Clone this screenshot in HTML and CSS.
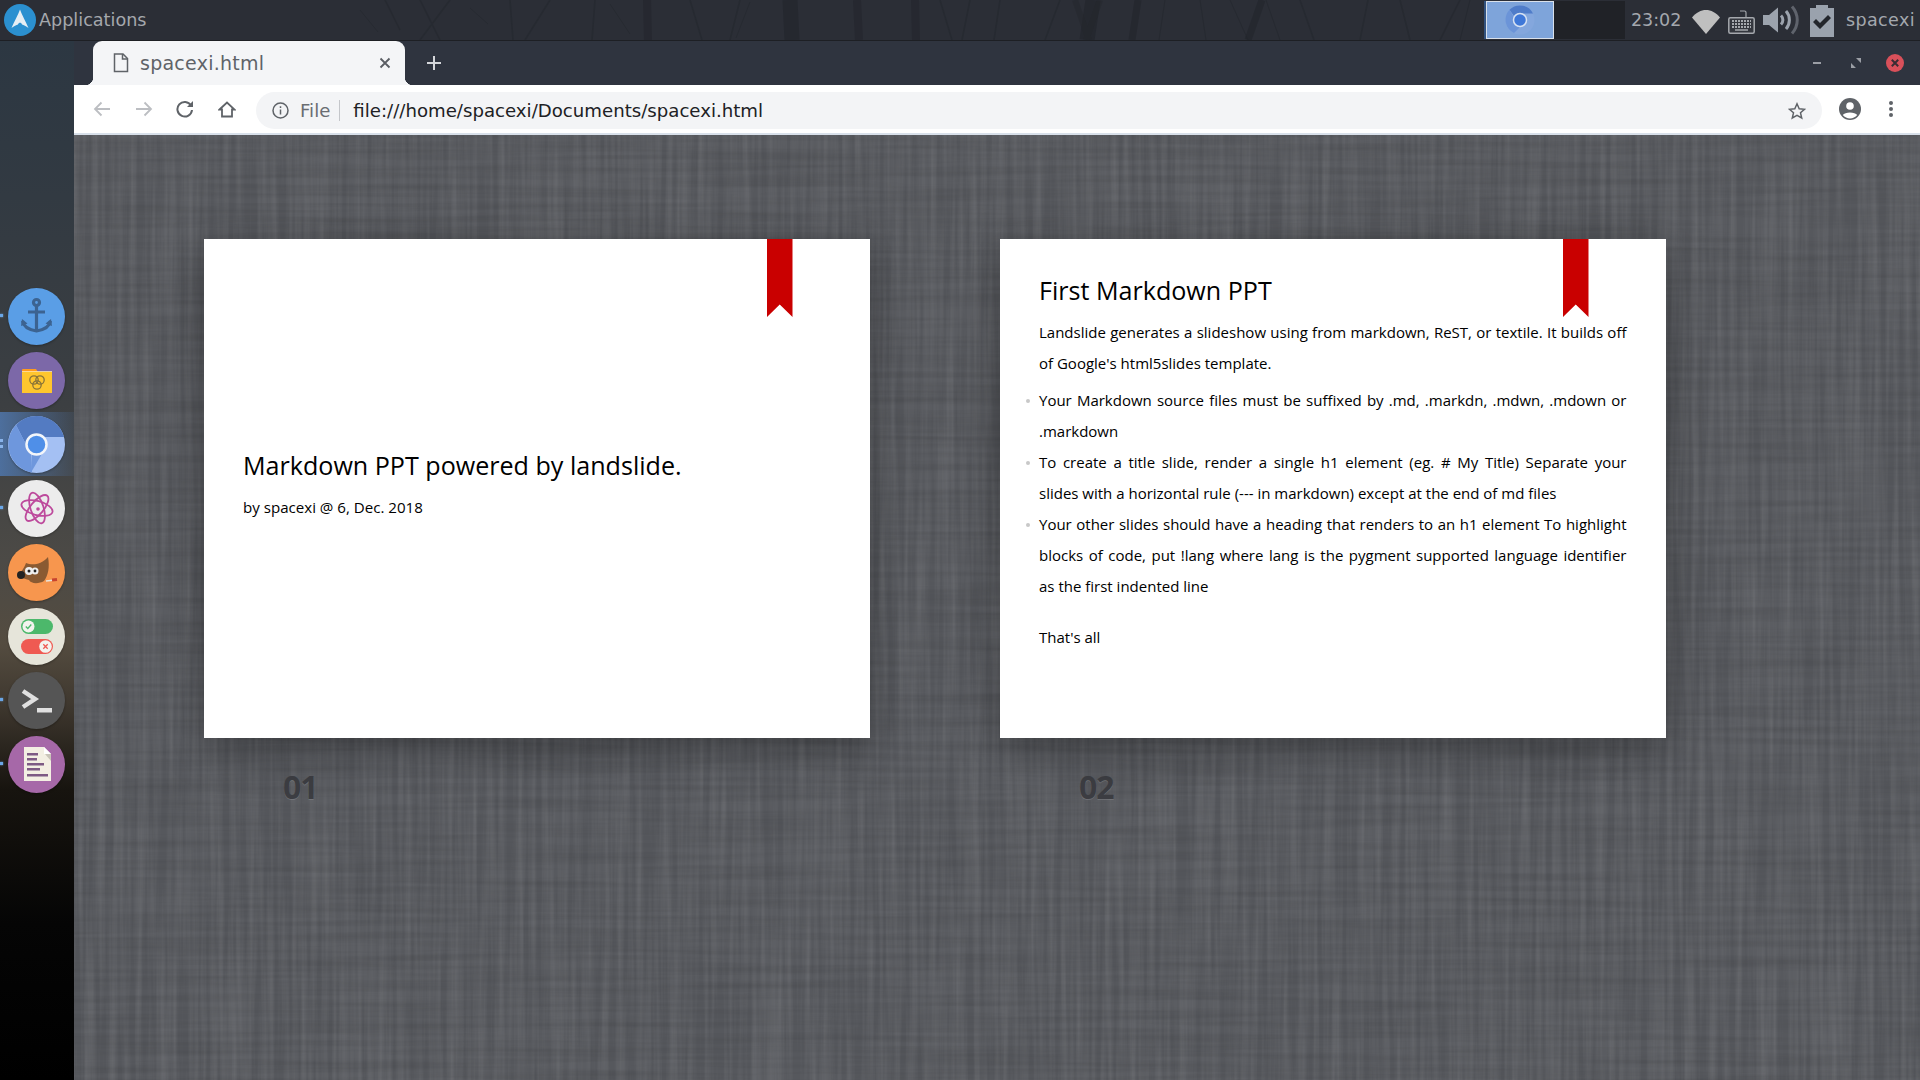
FILE: index.html
```html
<!DOCTYPE html>
<html lang="en">
<head>
<meta charset="utf-8">
<title>spacexi.html</title>
<link rel="stylesheet" href="styles.css">
</head>
<body>
<header class="panel">
  <svg class="panel-trees" width="1920" height="40" viewBox="0 0 1920 40" fill="none" stroke="#22252b">
    <path d="M647 0l1 40M857 0l2 40M915 0l1 40" stroke-width="8" opacity=".55"/>
    <path d="M790 0l2 40M1087 40l6-40" stroke-width="15" opacity=".6"/>
    <path d="M1138 0l-6 40M1262 0l-14 40" stroke-width="7" opacity=".6"/>
    <path d="M1100 0l-14 40M1075 0l14 40" stroke-width="6" opacity=".4"/>
    <path d="M595 0l-3 40M510 0l3 40M525 40l25-40M420 0l20 40M385 0l15 30M450 0l-30 40M1060 0l-15 40M940 0l12 40M970 0l-8 40M1400 0l10 40M1440 40l20-40M1300 0l14 40M1360 40l8-40M1000 0l-6 40M740 0l-10 40M690 0l12 40" stroke-width="1.500" opacity=".5"/>
    <path d="M470 8l18 16M360 10l18 22M610 4l20 30M750 2l-14 36M1230 0l18 40M1280 40l-14-40M1165 0l-6 40M1200 0l6 40M1470 0l-10 40" stroke-width="1" opacity=".5"/>
  </svg>
  <div class="apps">
    <svg class="arch" width="34" height="34" viewBox="0 0 34 34"><circle cx="17" cy="17" r="16" fill="#2b90d0"/><path d="M17 6.500C15.500 11 11 19 8.500 25 11 23.300 13.300 22 15 21.600 15.500 19 18.500 19 19 21.600 20.700 22 23 23.300 25.500 25 23 19 18.500 11 17 6.500Z" fill="#e6eef4"/></svg>
    <span class="apps-label">Applications</span>
  </div>
  <div class="taskbar">
    <div class="task-active">
      <svg width="30" height="30" viewBox="0 0 30 30"><circle cx="15" cy="15" r="14.500" fill="#84a7dd"/><path d="M15 .5A14.500 14.500 0 0 1 28 8.500L15 8.500A6.500 6.500 0 0 0 9 11L4.500 4.800A14.500 14.500 0 0 1 15 .5Z" fill="#4f7cc9"/><path d="M4.500 4.800L11 16 15 22 9 28A14.500 14.500 0 0 1 4.500 4.800Z" fill="#6b94d8"/><circle cx="15" cy="15" r="6.500" fill="#3f78d8" stroke="#d7e2f2" stroke-width="1.500"/></svg>
    </div>
    <div class="task-idle"></div>
  </div>
  <span class="clock">23:02</span>
  <div class="tray">
    <svg class="tray-wifi" width="28" height="24" viewBox="0 0 28 24"><path d="M0 7.500C8-2.500 20-2.500 28 7.500L14 24Z" fill="#bfbfbf"/></svg>
    <svg class="tray-kbd" width="27" height="26" viewBox="0 0 27 26"><path d="M18 9V4.500a1.500 1.500 0 0 0-1.500-1.500H12" fill="none" stroke="#a5a8ad" stroke-width="1.200"/><rect x=".8" y="9.800" width="25.400" height="15.400" rx="1.500" fill="#34373e" stroke="#a5a8ad" stroke-width="1.500"/><path d="M4 13h19M4 16h19M4 19h19" stroke="#a5a8ad" stroke-width="2" stroke-dasharray="2 1"/><path d="M7 22h13" stroke="#a5a8ad" stroke-width="1.500"/></svg>
    <svg class="tray-vol" width="37" height="30" viewBox="0 0 37 30"><path d="M0 10h6l9-7.500v25L6 20H0Z" fill="#9ca3ad"/><path d="M18 10.500c2.500 2.500 2.500 6.500 0 9" fill="none" stroke="#9ca3ad" stroke-width="3"/><path d="M23 6c4.500 5 4.500 13 0 18" fill="none" stroke="#9ca3ad" stroke-width="3"/><path d="M29 1.500c7 8 7 19 0 27" fill="none" stroke="#5f636c" stroke-width="3"/></svg>
    <svg class="tray-task" width="24" height="32" viewBox="0 0 24 32"><path d="M0 3h6V0h12v3h6v32H0Z" fill="#9aa2ad"/><path d="M3 17l3-3 4 4 8-8 3 3-11 11Z" fill="#23262c"/></svg>
  </div>
  <span class="user">spacexi</span>
</header>

<main class="desk">
  <aside class="dock">
    <div class="dock-item mark">
      <svg class="dock-icon" viewBox="0 0 57 57"><circle cx="28.500" cy="28.500" r="28.500" fill="#5a9ee6"/><g fill="none" stroke="#3c6391" stroke-width="3.200"><circle cx="28.500" cy="14.500" r="3"/><path d="M28.500 18V43M20 24h17"/><path d="M14.500 33c1 6 8 9 14 10 6-1 13-4 14-10"/></g><path d="M13 38l1-7 5.500 4.500ZM44 38l-1-7-5.500 4.500Z" fill="#3c6391"/></svg>
    </div>
    <div class="dock-item">
      <svg class="dock-icon" viewBox="0 0 57 57"><circle cx="28.500" cy="28.500" r="28.500" fill="#7c68a8"/><path d="M14 18a1 1 0 0 1 1-1h13l2 3H14Z" fill="#ff9b1e"/><rect x="14" y="20" width="30" height="21" fill="#ffc62e"/><rect x="14" y="19" width="30" height=".8" fill="#ffe9b0"/><g fill="none" stroke="#8a7438" stroke-width="1.300"><circle cx="26" cy="28" r="4.200"/><circle cx="32" cy="28" r="4.200"/><circle cx="29" cy="33" r="4.200"/></g></svg>
    </div>
    <div class="dock-item active mark-double">
      <svg class="dock-icon" viewBox="0 0 57 57"><circle cx="28.500" cy="28.500" r="28.500" fill="#a4c0f3"/><path d="M28.500 0A28.500 28.500 0 0 1 56 21H28.500A9 9 0 0 0 19 30.500L8 9A28.500 28.500 0 0 1 28.500 0Z" fill="#537bc2"/><path d="M8 9L19 30.500 23 37 24 56.500A28.500 28.500 0 0 1 8 9Z" fill="#6e97dd"/><path d="M35 36L23 56.500 24 36Z" fill="#6e97dd"/><circle cx="28.500" cy="28.500" r="10" fill="#4f8fe8" stroke="#f2f5fa" stroke-width="2.500"/></svg>
    </div>
    <div class="dock-item mark">
      <svg class="dock-icon" viewBox="0 0 57 57"><circle cx="28.500" cy="28.500" r="28.500" fill="#ececec"/><g fill="none" stroke="#bd4a9c" stroke-width="1.800"><ellipse cx="29" cy="28" rx="16" ry="7" transform="rotate(15 29 28)"/><ellipse cx="29" cy="28" rx="16" ry="6.500" transform="rotate(72 29 28)"/><ellipse cx="29" cy="28" rx="16" ry="6.500" transform="rotate(-50 29 28)"/></g><circle cx="30" cy="29" r="1.800" fill="#bd4a9c"/></svg>
    </div>
    <div class="dock-item">
      <svg class="dock-icon" viewBox="0 0 57 57"><circle cx="28.500" cy="28.500" r="28.500" fill="#f7964e"/><path d="M18 19c5 2 14 3 22-6 2 10 0 19-4 24-5 3-13 3-15-1-5-1-9-3-9-6 1-3 4-5 6-11Z" fill="#8a5a32"/><path d="M38 37l9-1" stroke="#e8e4dc" stroke-width="1.500"/><path d="M44 36l5-.5" stroke="#c7432f" stroke-width="3"/><circle cx="13" cy="31" r="4" fill="#222"/><circle cx="21" cy="27" r="4" fill="#eee"/><circle cx="27" cy="27" r="3.500" fill="#eee"/><circle cx="21" cy="27" r="1.500" fill="#222"/><circle cx="27" cy="27" r="1.400" fill="#222"/></svg>
    </div>
    <div class="dock-item">
      <svg class="dock-icon" viewBox="0 0 57 57"><circle cx="28.500" cy="28.500" r="28.500" fill="#e6e5da"/><rect x="13" y="11" width="32" height="15" rx="7.500" fill="#4cb86b"/><circle cx="20.500" cy="18.500" r="6" fill="#f3f3ee"/><path d="M17.800 18.500l2 2 3.500-4" fill="none" stroke="#4cb86b" stroke-width="1.300"/><rect x="13" y="31" width="32" height="15" rx="7.500" fill="#ef5a52"/><circle cx="37.500" cy="38.500" r="6.300" fill="#f3f3ee"/><path d="M35.300 36.300l4.400 4.400m0-4.400l-4.400 4.400" stroke="#ef5a52" stroke-width="1.300"/></svg>
    </div>
    <div class="dock-item mark">
      <svg class="dock-icon" viewBox="0 0 57 57"><circle cx="28.500" cy="28.500" r="28.500" fill="#555"/><path d="M15 19l12 8-12 8" fill="none" stroke="#e0e0e0" stroke-width="4.500"/><rect x="29" y="36" width="15" height="4.500" fill="#e0e0e0"/></svg>
    </div>
    <div class="dock-item mark">
      <svg class="dock-icon" viewBox="0 0 57 57"><circle cx="28.500" cy="28.500" r="28.500" fill="#a668a8"/><path d="M16 11h20l7 7v27H16Z" fill="#f3efe3"/><path d="M36 11l7 7h-7Z" fill="#fff"/><path d="M37 18h6v7Z" fill="#c9c4b8"/><g fill="#7d5a84"><rect x="19" y="17" width="11" height="2.500"/><rect x="19" y="22" width="10" height="2.500"/><rect x="19" y="27" width="17" height="2.500"/><rect x="19" y="32" width="13" height="2.500"/><rect x="19" y="38" width="21" height="2.500"/></g></svg>
    </div>
  </aside>

  <section class="window">
    <div class="tabstrip">
      <div class="tab">
        <svg class="tab-file" width="16" height="20" viewBox="0 0 16 20" fill="none" stroke="#5f6368" stroke-width="1.500"><path d="M1.500 1h8.500l4.500 4.500V18.500H1.500Z"/><path d="M9.500 1v5h5"/></svg>
        <span class="tab-title">spacexi.html</span>
        <svg class="tab-close" width="12" height="12" viewBox="0 0 12 12" stroke="#5a5d63" stroke-width="1.800"><path d="M1.500 1.500l9 9m0-9l-9 9"/></svg>
      </div>
      <svg class="newtab" width="16" height="16" viewBox="0 0 16 16" stroke="#d4d6da" stroke-width="2"><path d="M8 1v14M1 8h14"/></svg>
      <div class="winctl">
        <span class="win-min"></span>
        <svg class="win-max" width="10" height="10" viewBox="0 0 10 10" fill="#9b9ea5"><path d="M5 0h5v5ZM0 5l5 5H0Z"/></svg>
        <svg class="win-close" width="18" height="18" viewBox="0 0 18 18"><circle cx="9" cy="9" r="9" fill="#d9505a"/><path d="M5.800 5.800l6.400 6.400m0-6.400l-6.400 6.400" stroke="#3a2c33" stroke-width="2"/></svg>
      </div>
    </div>
    <nav class="toolbar">
      <svg class="tb-icon tb-back" width="18" height="16" viewBox="0 0 18 16" fill="none" stroke="#bcbec2" stroke-width="1.800"><path d="M17 8H2M8.500 1.500L2 8l6.500 6.500"/></svg>
      <svg class="tb-icon tb-fwd" width="18" height="16" viewBox="0 0 18 16" fill="none" stroke="#bcbec2" stroke-width="1.800"><path d="M1 8h15M9.500 1.500L16 8l-6.500 6.500"/></svg>
      <svg class="tb-icon tb-reload" width="18" height="18" viewBox="0 0 18 18" fill="none" stroke="#5f6368" stroke-width="2"><path d="M15 5.500A7.300 7.300 0 1 0 16 10"/><path d="M17 1v6h-6" fill="#5f6368" stroke="none"/></svg>
      <svg class="tb-icon tb-home" width="18" height="17" viewBox="0 0 18 17" fill="none" stroke="#5f6368" stroke-width="1.800"><path d="M1.500 8.500L9 1.500l7.500 7H14v7H4v-7Z"/></svg>
      <div class="omnibox">
        <svg class="omni-info" width="17" height="17" viewBox="0 0 17 17" fill="none" stroke="#5f6368" stroke-width="1.500"><circle cx="8.500" cy="8.500" r="7.500"/><path d="M8.500 7.500v5M8.500 4.200v1.800"/></svg>
        <span class="omni-file">File</span>
        <span class="omni-sep"></span>
        <span class="omni-url">file:///home/spacexi/Documents/spacexi.html</span>
        <svg class="omni-star" width="18" height="18" viewBox="0 0 18 18" fill="none" stroke="#5f6368" stroke-width="1.500"><path d="M9 1.800l2.200 4.900 5.300.6-4 3.500 1.200 5.200L9 13.300 4.300 16l1.200-5.200-4-3.500 5.300-.6Z"/></svg>
      </div>
      <svg class="tb-avatar" width="22" height="22" viewBox="0 0 22 22"><circle cx="11" cy="11" r="11" fill="#5f6368"/><circle cx="11" cy="8" r="3.800" fill="#fff"/><path d="M3.800 17c2-3.500 12.400-3.500 14.400 0-3.500 4.500-10.900 4.500-14.400 0Z" fill="#fff"/></svg>
      <svg class="tb-menu" width="6" height="18" viewBox="0 0 6 18" fill="#5f6368"><circle cx="3" cy="3" r="2"/><circle cx="3" cy="9" r="2"/><circle cx="3" cy="15" r="2"/></svg>
    </nav>
    <div class="page">
      <svg class="linen" width="100%" height="100%">
        <filter id="weave-v" x="0" y="0" width="100%" height="100%"><feTurbulence type="fractalNoise" baseFrequency="0.16 0.005" numOctaves="3" seed="4"/><feColorMatrix values="0 0 0 0 1  0 0 0 0 1  0 0 0 0 1  0.18 0 0 0 -0.055"/></filter>
        <filter id="weave-h" x="0" y="0" width="100%" height="100%"><feTurbulence type="fractalNoise" baseFrequency="0.005 0.16" numOctaves="3" seed="9"/><feColorMatrix values="0 0 0 0 0  0 0 0 0 0  0 0 0 0 0  0.16 0 0 0 -0.05"/></filter>
        <rect width="100%" height="100%" fill="#56585d"/>
        <rect width="100%" height="100%" filter="url(#weave-v)"/>
        <rect width="100%" height="100%" filter="url(#weave-h)"/>
      </svg>
      <div class="deck">
        <article class="slide-wrap">
          <div class="slide slide-title">
            <i class="ribbon"></i>
            <h1 class="title-one">Markdown PPT powered by landslide.</h1>
            <p class="byline">by spacexi @ 6, Dec. 2018</p>
          </div>
          <div class="slide-no">01</div>
        </article>
        <article class="slide-wrap">
          <div class="slide slide-body">
            <i class="ribbon"></i>
            <h1 class="title-two">First Markdown PPT</h1>
            <p class="para">Landslide generates a slideshow using from markdown, ReST, or textile. It builds off of Google's html5slides template.</p>
            <ul class="points">
              <li>Your Markdown source files must be suffixed by .md, .markdn, .mdwn, .mdown or .markdown</li>
              <li>To create a title slide, render a single h1 element (eg. # My Title) Separate your slides with a horizontal rule (--- in markdown) except at the end of md files</li>
              <li>Your other slides should have a heading that renders to an h1 element To highlight blocks of code, put !lang where lang is the pygment supported language identifier as the first indented line</li>
            </ul>
            <p class="para closing">That's all</p>
          </div>
          <div class="slide-no">02</div>
        </article>
      </div>
    </div>
  </section>
</main>
</body>
</html>
```

FILE: styles.css
```css
* { box-sizing: border-box; }
html, body { margin: 0; height: 100%; }
body {
  width: 1920px;
  height: 1080px;
  overflow: hidden;
  display: flex;
  flex-direction: column;
  font-family: "DejaVu Sans", sans-serif;
  background: #000;
}

/* top panel */
.panel {
  position: relative;
  height: 41px;
  flex: none;
  display: flex;
  align-items: center;
  padding-right: 5px;
  background: #2b2e36;
  border-bottom: 1px solid #1d1f24;
  color: #a4a8ae;
}
.panel-trees { position: absolute; left: 0; top: 0; z-index: 0; }
.panel > div, .panel > span { z-index: 1; }
.apps { display: flex; align-items: center; padding-left: 3px; gap: 2px; flex: 1; }
.arch { display: block; }
.apps-label { font-size: 17.600px; color: #a5a8ad; }
.taskbar { display: flex; height: 38px; }
.task-active {
  width: 68px;
  height: 38px;
  display: flex;
  align-items: center;
  justify-content: center;
  background: #7ea4da;
  border: 1px solid #d9e0ea;
  box-shadow: -2px 0 0 #33527e;
}
.task-idle { width: 71px; background: #202227; }
.clock { font-size: 17.500px; margin-left: 6px; width: 58px; }
.tray { display: flex; align-items: center; }
.tray-wifi { margin-left: 3.400px; margin-top: 3px; }
.tray-kbd { margin-left: 8px; margin-top: 1px; }
.tray-vol { margin-left: 8px; }
.tray-task { margin-left: 10px; margin-top: 1px; }
.user { font-size: 17.500px; margin-left: 11.600px; letter-spacing: .4px; }

/* desktop */
.desk { flex: 1; display: flex; min-height: 0; }
.dock {
  width: 74px;
  flex: none;
  display: flex;
  flex-direction: column;
  padding-top: 243px;
  background: linear-gradient(180deg, #2c3742 0, #323a42 15%, #3c3f42 35%, #4c4a46 50%, #544c40 58%, #3e372e 64%, #17140f 72%, #050505 85%, #000 100%);
}
.dock-item {
  position: relative;
  height: 64px;
  display: flex;
  align-items: center;
  padding-left: 8px;
}
.dock-icon { width: 57px; height: 57px; display: block; filter: drop-shadow(0 1px 1px rgba(0, 0, 0, .3)); }
.dock-item.active { background: linear-gradient(90deg, #4d6f9d, rgba(77, 111, 157, .15)); }
.mark::before {
  content: "";
  position: absolute;
  left: 0;
  top: 30px;
  width: 3px;
  height: 3px;
  background: #6aa6e6;
  box-shadow: 0 0 2px #6aa6e6;
}
.mark-double::before {
  content: "";
  position: absolute;
  left: 0;
  top: 27px;
  width: 3px;
  height: 3px;
  background: #8ab4ea;
  box-shadow: 0 6px 0 #8ab4ea;
}

/* browser */
.window { flex: 1; display: flex; flex-direction: column; min-width: 0; }
.tabstrip {
  height: 44px;
  flex: none;
  display: flex;
  align-items: stretch;
  padding-left: 19px;
  background: #2f343f;
}
.tab {
  position: relative;
  width: 312px;
  display: flex;
  align-items: center;
  padding-left: 20px;
  background: #f4f5f7;
  border-radius: 9px 9px 0 0;
}
.tab::before, .tab::after {
  content: "";
  position: absolute;
  bottom: 0;
  width: 8px;
  height: 8px;
}
.tab::before { left: -8px; background: radial-gradient(circle at 0 0, #2f343f 8px, #f4f5f7 8.500px); }
.tab::after { right: -8px; background: radial-gradient(circle at 100% 0, #2f343f 8px, #f4f5f7 8.500px); }
.tab-file { flex: none; }
.tab-title { font-size: 19px; color: #5f6368; margin-left: 11px; flex: 1; letter-spacing: .25px; }
.tab-close { margin-right: 14px; }
.newtab { align-self: center; margin-left: 21px; }
.winctl { margin-left: auto; display: flex; align-items: center; padding-right: 16px; }
.win-min { width: 8px; height: 2px; background: #9b9ea5; }
.win-max { margin-left: 30px; }
.win-close { margin-left: 25px; }

.toolbar {
  height: 50px;
  flex: none;
  display: flex;
  align-items: center;
  padding-left: 19px;
  background: #fff;
  border-bottom: 2px solid #d8e0ea;
}
.tb-icon { flex: none; }
.tb-fwd { margin-left: 24px; }
.tb-reload { margin-left: 23px; }
.tb-home { margin-left: 24px; }
.omnibox {
  margin: 3px 0 0 20px;
  width: 1566px;
  height: 37px;
  flex: none;
  display: flex;
  align-items: center;
  padding-left: 16px;
  padding-right: 16px;
  background: #f3f4f6;
  border-radius: 19px;
}
.omni-info { flex: none; }
.omni-file { font-size: 18.150px; color: #6a6d72; margin-left: 11px; }
.omni-sep { width: 1px; height: 21px; background: #c4c6ca; margin-left: 9px; }
.omni-url { font-size: 18.150px; color: #202124; margin-left: 13px; flex: 1; }
.omni-star { flex: none; }
.tb-avatar { margin-left: 17px; }
.tb-menu { margin-left: 27px; }

.page {
  position: relative;
  flex: 1;
  min-height: 0;
  overflow: hidden;
}
.linen { position: absolute; inset: 0; display: block; }
.deck {
  position: relative;
  display: flex;
  gap: 130.500px;
  padding: 104px 0 0 130px;
}
.slide-wrap { width: 665.500px; flex: none; }
.slide {
  position: relative;
  height: 499px;
  background: #fff;
  color: #111;
  font-family: "Open Sans", "Noto Sans", sans-serif;
  box-shadow: 0 10px 38px rgba(0, 0, 0, .34);
}
.ribbon {
  position: absolute;
  left: 563px;
  top: 0;
  width: 25.500px;
  height: 78px;
  background: #c90000;
  clip-path: polygon(0 0, 100% 0, 100% 100%, 50% 84%, 0 100%);
}
.slide-title {
  display: flex;
  flex-direction: column;
  justify-content: center;
  padding: 0 39px 12px;
}
.title-one { margin: 0; font-size: 25.100px; font-weight: 400; line-height: 34px; color: #000; }
.byline { margin: 15px 0 0; font-size: 15.100px; line-height: 20px; color: #000; }
.slide-body { padding: 34px 39px 0; }
.title-two { margin: 0 0 10px; font-size: 25.100px; font-weight: 400; line-height: 34px; color: #000; }
.para { margin: 0; font-size: 15px; line-height: 31px; text-align: justify; color: #000; }
.points { list-style: none; margin: 6px 0 0; padding: 0; }
.points li { position: relative; font-size: 15px; line-height: 31px; text-align: justify; color: #000; }
.points li::before {
  content: "";
  position: absolute;
  left: -13px;
  top: 14px;
  width: 4px;
  height: 4px;
  border-radius: 50%;
  background: #c8c8c8;
}
.closing { margin-top: 20px; }
.slide-no {
  margin: 29px 0 0 79px;
  font-family: "Open Sans", "Noto Sans", sans-serif;
  font-size: 32px;
  font-weight: 700;
  line-height: 40px;
  letter-spacing: -1px;
  color: #3c3d42;
  text-shadow: 0 1px 0 rgba(255, 255, 255, .14);
}
```
